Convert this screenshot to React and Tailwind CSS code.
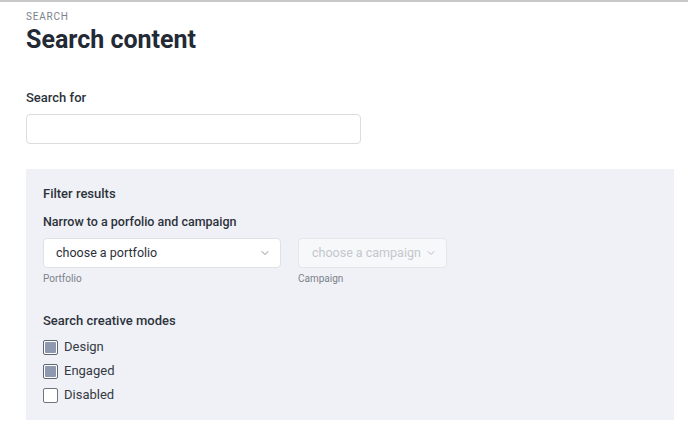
import { ChevronDown } from 'lucide-react'

const MODES = [
  { label: 'Design', checked: true },
  { label: 'Engaged', checked: true },
  { label: 'Disabled', checked: false },
]

function Checkbox({ label, checked }) {
  return (
    <label className="flex items-center gap-[6px] h-[24px] text-[13px] text-[#343a44]">
      <span
        className={`w-[15px] h-[15px] rounded-[2px] border flex items-center justify-center bg-white ${
          checked ? 'border-[#5f6670]' : 'border-[#6f757d]'
        }`}
      >
        {checked && <span className="w-[11px] h-[11px] rounded-[1px] bg-[#8e99b0]" />}
      </span>
      {label}
    </label>
  )
}

export default function App() {
  return (
    <div
      className="w-[688px] h-[438px] bg-white border-t-2 border-[#c9c9c9] px-[26px]"
      style={{ fontFamily: 'Roboto, "Noto Sans", sans-serif' }}
    >
      {/* ── Header ── */}
      <p className="pt-[9px] text-[10px] leading-[12px] tracking-[0.08em] text-[#7b818a] uppercase">
        Search
      </p>
      <h1 className="mt-[3px] text-[25px] leading-[28px] font-bold text-[#232a35]">
        Search content
      </h1>

      {/* ── Search field ── */}
      <p className="mt-[36px] text-[13px] leading-[16px] font-medium text-[#2d333c]">Search for</p>
      <input
        className="mt-[8px] block w-[335px] h-[30px] rounded-[4px] border border-[#dcdcdc] bg-white outline-none"
      />

      {/* ── Filter panel ── */}
      <div className="mt-[25px] w-[648px] h-[251px] bg-[#f0f1f6] px-[17px] pt-[17px]">
        <p className="text-[13px] leading-[16px] font-medium text-[#2d333c]">Filter results</p>
        <p className="mt-[12px] text-[12.5px] leading-[16px] font-medium text-[#2d333c]">
          Narrow to a porfolio and campaign
        </p>

        <div className="mt-[8px] flex gap-[17px]">
          <div>
            <div className="w-[238px] h-[30px] rounded-[4px] border border-[#dfe1e6] bg-white flex items-center justify-between pl-[12px] pr-[9px] text-[12.5px] text-[#2b313a]">
              choose a portfolio
              <ChevronDown size={12} className="text-[#8a9099]" strokeWidth={2} />
            </div>
            <p className="mt-[5px] text-[10px] leading-[12px] text-[#7b818a]">Portfolio</p>
          </div>
          <div>
            <div className="w-[149px] h-[30px] rounded-[4px] border border-[#e4e6ea] bg-[#f7f8fa] flex items-center justify-between pl-[13px] pr-[9px] text-[12.5px] text-[#c3c7cd]">
              choose a campaign
              <ChevronDown size={12} className="text-[#b7bcc3]" strokeWidth={2} />
            </div>
            <p className="mt-[5px] text-[10px] leading-[12px] text-[#7b818a]">Campaign</p>
          </div>
        </div>

        <p className="mt-[28px] text-[13px] leading-[16px] font-medium text-[#2d333c]">
          Search creative modes
        </p>
        <div className="mt-[6px] flex flex-col">
          {MODES.map(m => (
            <Checkbox key={m.label} {...m} />
          ))}
        </div>
      </div>
    </div>
  )
}
